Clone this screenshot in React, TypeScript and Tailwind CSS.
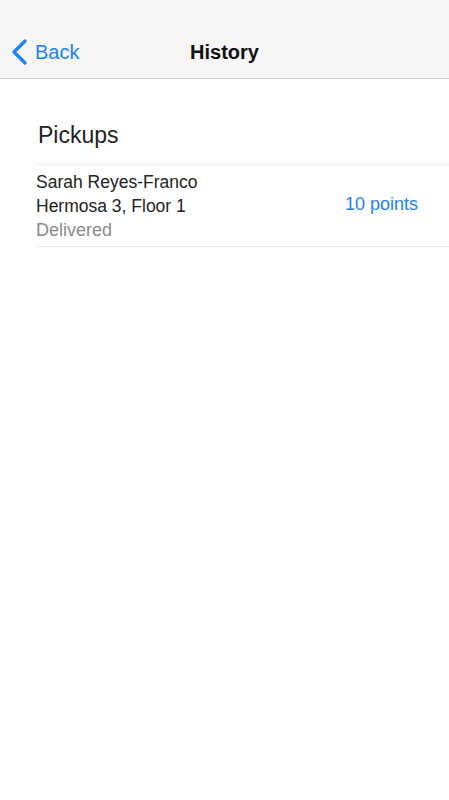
import React from "react";

export default function App() {
  return (
    <div
      className="w-[449px] h-[800px] bg-white"
      style={{ fontFamily: '"Liberation Sans", Arial, sans-serif' }}
    >
      <div className="relative h-[79px] bg-[#f6f6f6] border-b border-[#c9c9c9]">
        <div className="absolute left-0 top-[39px] flex items-center">
          <svg width="40" height="26" viewBox="0 0 40 26">
            <path
              d="M25 2 L14 13 L25 24"
              fill="none"
              stroke="#1a82fb"
              strokeWidth="3.2"
              strokeLinecap="round"
              strokeLinejoin="round"
            />
          </svg>
          <span className="-ml-[5px] text-[20px] leading-[26px] text-[#1a82fb]">Back</span>
        </div>
        <div className="absolute inset-x-0 top-[39px] text-center text-[20px] leading-[26px] font-bold text-[#111]">
          History
        </div>
      </div>
      <div className="pt-[42px]">
        <div className="pl-[38px] text-[23px] leading-[28px] text-[#222]">Pickups</div>
        <div className="ml-[35px] mt-[15px] border-t border-b border-[#ebebef] flex items-center pt-[5px] pb-[4px]">
          <div className="flex-1 pl-[1px] text-[17.5px] leading-[24px]">
            <div className="text-[#222]">Sarah Reyes-Franco</div>
            <div className="text-[#222]">Hermosa 3, Floor 1</div>
            <div className="text-[18px] text-[#8a8a8a]">Delivered</div>
          </div>
          <div className="w-[104px] text-[18px] leading-[24px] text-[#1a82fb] -mt-[4px]">10 points</div>
        </div>
      </div>
    </div>
  );
}
